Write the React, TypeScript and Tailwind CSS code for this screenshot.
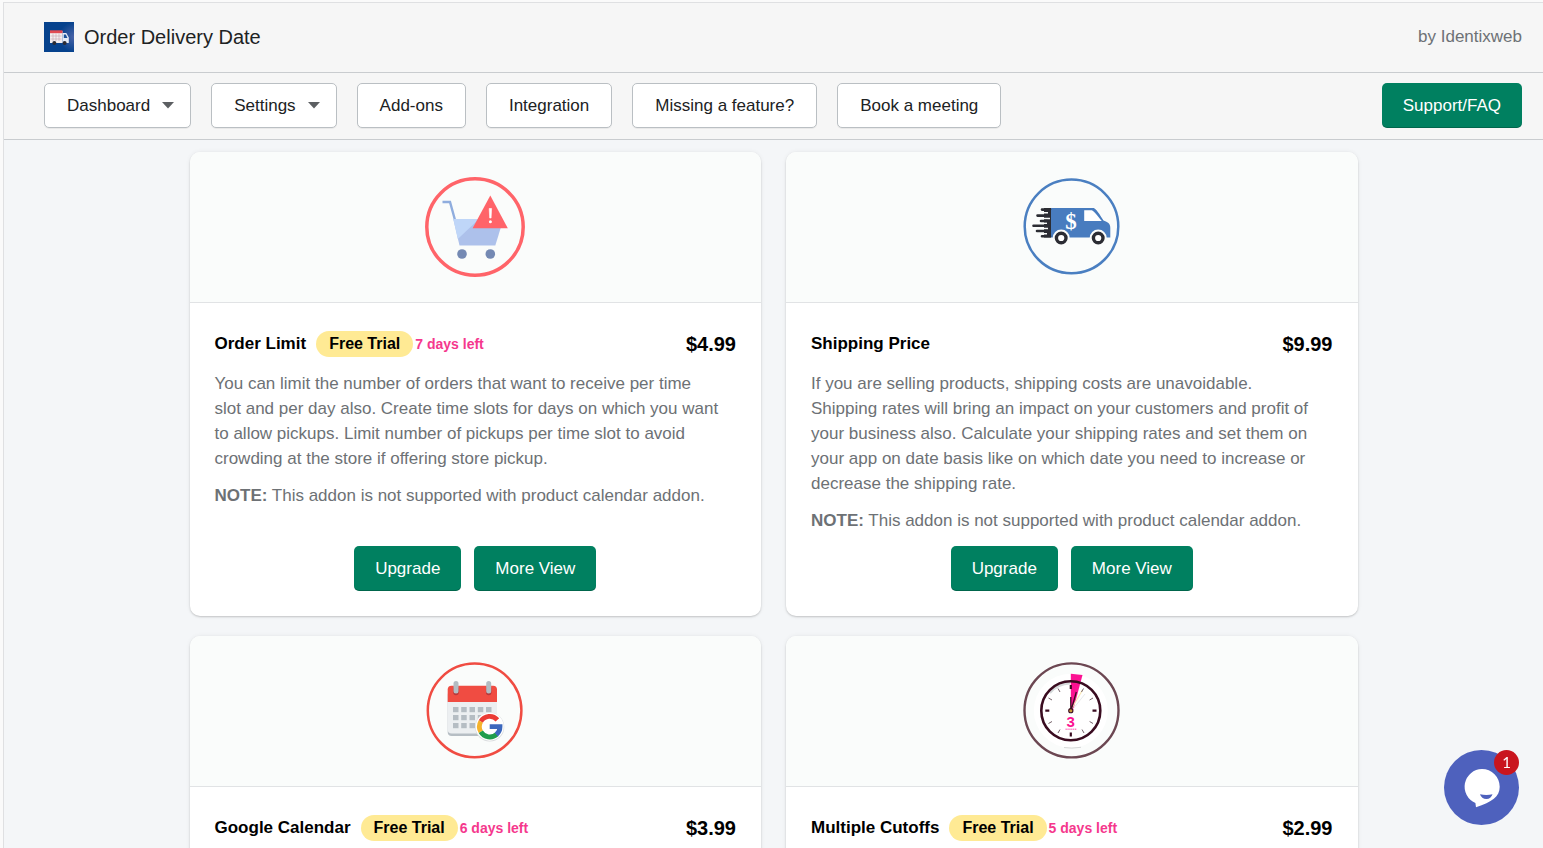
import type { ReactNode } from "react";

type Addon = {
  title: string;
  price: string;
  trial?: string;
  description?: string;
  note?: string;
  icon: ReactNode;
};

const CartLimitIcon = () => (
  <svg viewBox="0 0 100 100" className="size-[100px]" aria-hidden="true">
    <circle cx="50" cy="50" r="48.2" fill="none" stroke="#ff6469" strokeWidth="3.5" />
    <path d="M17.5 25H25L30 43" fill="none" stroke="#8fadde" strokeWidth="2.4" />
    <path d="M28.3 42H72L76 50L70.3 68.5H34.5Z" fill="#adc1eb" />
    <path d="M28.3 42H54L32.8 62Z" fill="#bfd6f8" />
    <path d="M65.3 18.5L82.8 51.2H47.6Z" fill="#ff6469" />
    <path d="M64.2 31.5h2.4l-.5 9.5h-1.4z" fill="#fff" stroke="#fff" strokeWidth=".6" />
    <circle cx="65.4" cy="44.8" r="1.5" fill="#fff" />
    <circle cx="37" cy="77" r="4.8" fill="#7489b3" />
    <circle cx="65.3" cy="77" r="4.8" fill="#7489b3" />
  </svg>
);

const ShippingIcon = () => (
  <svg viewBox="0 0 100 100" className="size-[100px]" aria-hidden="true">
    <circle cx="49.5" cy="49.4" r="46.8" fill="none" stroke="#4a7fc1" strokeWidth="2.5" />
    <path d="M28.5 31H71C73 31 75 33 81.5 43.5C87 45.5 88.3 47 88.3 51V60.5H28.5Z" fill="#487cbf" />
    <path d="M22 31H29V60.5H22Z" fill="#2b2c33" />
    <path d="M20 35.7H26M21 41.4H28M17 46.3H25M21 51.4H26M21 56.7H25" stroke="#fafcfb" strokeWidth="1.5" />
    <g stroke="#2b2c33" strokeWidth="2.6" strokeLinecap="round">
      <path d="M20 32.6H28M15.5 38.6H25M19 44H25M11.5 48.7H25M15 54H25M20 59.2H28" />
    </g>
    <path d="M62.2 33.2H69.8C72 34 75 38 79.8 44H62.2Z" fill="#fff" />
    <text x="49" y="52" textAnchor="middle" fontSize="23" className="fill-white font-['Liberation_Serif',serif] font-bold">
      $
    </text>
    <g fill="#fff" stroke="#fafcfb" strokeWidth="2">
      <circle cx="39.2" cy="61" r="7.5" />
      <circle cx="76.2" cy="61" r="7.5" />
    </g>
    <g fill="#fff" stroke="#2b2c33" strokeWidth="3.4">
      <circle cx="39.2" cy="61" r="4.8" />
      <circle cx="76.2" cy="61" r="4.8" />
    </g>
  </svg>
);

const CalendarIcon = () => (
  <svg viewBox="0 0 100 100" className="size-[100px]" aria-hidden="true">
    <circle cx="49.6" cy="49.4" r="46.8" fill="none" stroke="#f04c42" strokeWidth="2.5" />
    <rect x="22.7" y="30" width="49.3" height="45" rx="4" fill="#b6bec4" />
    <rect x="22.7" y="28" width="49.3" height="44.5" rx="4" fill="#eceff1" />
    <path d="M22.7 41V28.5Q22.7 24.7 26.5 24.7H68.2Q72 24.7 72 28.5V41Z" fill="#f04c42" />
    <g stroke="#b8373a" strokeWidth="5.5" strokeLinecap="round">
      <path d="M31 28V31.5M63.7 28V31.5" />
    </g>
    <g stroke="#b3bcc2" strokeWidth="5" strokeLinecap="round">
      <path d="M31 22.5V30M63.7 22.5V30" />
    </g>
    <g fill="#b5bdc3">
      {[46, 54, 62].map((y) =>
        [28, 36.2, 44.5, 52.8, 61].map((x) => <rect key={`${x}-${y}`} x={x} y={y} width="5.5" height="5.2" />)
      )}
    </g>
    <circle cx="64.7" cy="66" r="14.6" fill="#d9dcde" />
    <circle cx="64.7" cy="65.7" r="14" fill="#fff" />
    <g fill="none" strokeWidth="4.8">
      <path d="M55.8 60.5A10.3 10.3 0 0 1 72.4 58.8" stroke="#eb3b35" />
      <path d="M55.8 70.8A10.3 10.3 0 0 1 55.8 60.5" stroke="#f5b32c" />
      <path d="M71.8 73.2A10.3 10.3 0 0 1 55.8 70.8" stroke="#1f9d4c" />
      <path d="M64.7 65.7H75A10.3 10.3 0 0 1 71.3 73.6" stroke="#3c68bd" />
    </g>
  </svg>
);

const CutoffIcon = () => (
  <svg viewBox="0 0 100 100" className="size-[100px]" aria-hidden="true">
    <circle cx="49.5" cy="49.4" r="47" fill="#fafcfb" stroke="#6c4752" strokeWidth="2.4" />
    <circle cx="48.8" cy="49.7" r="37" fill="#fff" />
    <path d="M42 86.5Q49 87.8 59 86.3" fill="none" stroke="#d6d8d8" strokeWidth="1" />
    <circle cx="48.8" cy="49.7" r="29.5" fill="#fff" />
    <path d="M28 32A27 27 0 0 1 48 22.5" fill="none" stroke="#d5dadb" strokeWidth="2" />
    <path d="M48.8 12.7L60.5 14L51 49.7H48.8Z" fill="#fb1292" />
    <circle cx="48.8" cy="49.7" r="29.5" fill="none" stroke="#3a0c20" strokeWidth="2.6" />
    <path d="M50 47L60.5 29" stroke="#f7e6b5" strokeWidth="1.2" />
    <path d="M51 48L63 33" stroke="#e8ebec" strokeWidth="1" />
    <g stroke="#3a0c20" strokeWidth="2.2">
      <path d="M48.8 24V28M48.8 71.5V75.5M23.3 49.7H27.3M70.5 49.7H74.5" />
    </g>
    <g stroke="#76636b" strokeWidth="1">
      <path d="M36 27.5L38 31M26.5 37L30 39M67.6 39L71 37M67.6 60.5L71 62.5M60 68.5L62 72M38 68.5L36 72M30 60.5L26.5 62.5M59.5 31L61.5 27.5" />
    </g>
    <path d="M48.8 49.7V36M49.2 49L54.3 31" stroke="#3a0c20" strokeWidth="1.3" />
    <circle cx="48.8" cy="49.7" r="2.1" fill="#c99a35" stroke="#3a0c20" strokeWidth="1.1" />
    <text x="48.7" y="65.6" textAnchor="middle" fontSize="15" className="fill-[#fb1292] font-['Liberation_Sans',sans-serif] font-bold">
      3
    </text>
    <path d="M43.5 68.3H54.5" stroke="#fb1292" strokeOpacity=".55" strokeWidth="1.6" strokeDasharray="1.3 .6" />
  </svg>
);

const Logo = () => (
  <svg viewBox="0 0 30 30" className="size-[30px]" aria-hidden="true">
    <defs>
      <radialGradient id="logo-glow" cx="1" cy=".5" r=".5">
        <stop offset="0" stopColor="#4a64a8" />
        <stop offset="1" stopColor="#06428d" />
      </radialGradient>
    </defs>
    <rect width="30" height="30" fill="url(#logo-glow)" />
    <path d="M6 9H18.5V21H6Z" fill="#f3eef0" />
    <path d="M6 8.3H18.5V11.2H6Z" fill="#e24a52" />
    <path d="M18.5 11H22.3L24.8 15.5V21H18.5Z" fill="#e6edf7" />
    <path d="M19.8 12.5H21.8L23.5 16H19.8Z" fill="#1c5299" />
    <path d="M6.5 14H17.5M6.5 17H17.5M9 11.5V19M12 11.5V19M15 11.5V19" stroke="#c8a5ae" strokeWidth=".6" />
    <circle cx="10.3" cy="21" r="2" fill="#2b2b33" />
    <circle cx="20.6" cy="21" r="2" fill="#2b2b33" />
  </svg>
);

const navItems = [
  { label: "Dashboard", menu: true },
  { label: "Settings", menu: true },
  { label: "Add-ons" },
  { label: "Integration" },
  { label: "Missing a feature?" },
  { label: "Book a meeting" },
];

const addons: Addon[] = [
  {
    title: "Order Limit",
    price: "$4.99",
    trial: "7 days left",
    description:
      "You can limit the number of orders that want to receive per time slot and per day also. Create time slots for days on which you want to allow pickups. Limit number of pickups per time slot to avoid crowding at the store if offering store pickup.",
    note: "This addon is not supported with product calendar addon.",
    icon: <CartLimitIcon />,
  },
  {
    title: "Shipping Price",
    price: "$9.99",
    description:
      "If you are selling products, shipping costs are unavoidable. Shipping rates will bring an impact on your customers and profit of your business also. Calculate your shipping rates and set them on your app on date basis like on which date you need to increase or decrease the shipping rate.",
    note: "This addon is not supported with product calendar addon.",
    icon: <ShippingIcon />,
  },
  { title: "Google Calendar", price: "$3.99", trial: "6 days left", icon: <CalendarIcon /> },
  { title: "Multiple Cutoffs", price: "$2.99", trial: "5 days left", icon: <CutoffIcon /> },
];

const PrimaryButton = ({ children }: { children: ReactNode }) => (
  <button
    type="button"
    className="h-[45px] rounded-[5px] bg-[#008060] px-[21px] text-[17px] text-white shadow-[inset_0_-1px_0_rgba(0,0,0,0.2)] hover:bg-[#006e52]"
  >
    {children}
  </button>
);

const AddonCard = ({ addon }: { addon: Addon }) => (
  <article className="flex flex-col overflow-hidden rounded-[10px] bg-white shadow-[0_0_5px_rgba(23,24,24,0.06),0_1px_2px_rgba(0,0,0,0.18)]">
    <div className="flex justify-center border-b border-[#e1e3e5] bg-[#fafcfb] py-[25px]">{addon.icon}</div>

    <div className="flex flex-1 flex-col p-[25px]">
      <div className="mb-[11px] flex h-8 items-center">
        <h2 className="text-[17px] font-bold text-black">{addon.title}</h2>
        {addon.trial && (
          <>
            <span className="ml-[10px] rounded-full bg-[#ffea94] px-[13px] text-[16px] leading-[26px] font-bold text-black">
              Free Trial
            </span>
            <span className="ml-[2px] text-[14px] font-bold text-[#f5388d]">{addon.trial}</span>
          </>
        )}
        <span className="ml-auto text-[20px] font-bold text-black">{addon.price}</span>
      </div>

      {addon.description && (
        <>
          <div className="max-w-[507px] space-y-3 text-[17px] leading-[25px] text-[#6d7175]">
            <p>{addon.description}</p>
            <p>
              <strong>NOTE:</strong> {addon.note}
            </p>
          </div>
          <div className="mt-auto flex justify-center gap-[13px] pt-[13px]">
            <PrimaryButton>Upgrade</PrimaryButton>
            <PrimaryButton>More View</PrimaryButton>
          </div>
        </>
      )}
    </div>
  </article>
);

const App = () => {
  return (
    <div className="flex h-screen flex-col overflow-hidden bg-[#fafafa] pt-[2px] font-['Liberation_Sans',Arial,sans-serif] text-[#202223]">
      <div className="ml-[3px] flex min-h-0 flex-1 flex-col border-t border-l border-[#dfe0e2] bg-[#f4f6f8]">
        {/* App title bar */}
        <header className="flex h-[70px] shrink-0 items-center justify-between border-b border-[#c9cccf] bg-[#f6f6f6] pr-[21px] pb-[2px] pl-10">
          <div className="flex items-center gap-[10px]">
            <Logo />
            <h1 className="text-[20px] leading-[28px]">Order Delivery Date</h1>
          </div>
          <span className="text-[17px] text-[#6d7175]">by Identixweb</span>
        </header>

        {/* Navigation */}
        <nav className="flex shrink-0 items-center gap-5 border-b border-[#c9cccf] bg-[#f6f6f6] pt-[10px] pr-[21px] pb-[11px] pl-10">
          {navItems.map((item) => (
            <button
              key={item.label}
              type="button"
              className="flex h-[45px] items-center rounded-[5px] border border-[#babfc3] bg-white px-[22px] text-[17px] whitespace-nowrap shadow-[0_1px_0_rgba(0,0,0,0.05)] hover:bg-gray-50"
            >
              {item.label}
              {item.menu && (
                <svg viewBox="0 0 12 7" className="mr-[-6px] ml-3 h-[7px] w-3" aria-hidden="true">
                  <path d="M0 0H12L6 6.6Z" fill="#5c5f62" />
                </svg>
              )}
            </button>
          ))}
          <div className="ml-auto">
            <PrimaryButton>Support/FAQ</PrimaryButton>
          </div>
        </nav>

        {/* Add-on cards */}
        <main className="min-h-0 flex-1 overflow-hidden px-5 pt-3">
          <div className="mx-auto grid max-w-[1168px] grid-cols-2 gap-x-[25px] gap-y-5">
            {addons.map((addon) => (
              <AddonCard key={addon.title} addon={addon} />
            ))}
          </div>
        </main>
      </div>

      {/* Chat launcher */}
      <button
        type="button"
        aria-label="Open chat"
        className="fixed right-6 bottom-[23px] size-[75px] rounded-full bg-[#4e61bd]"
      >
        <svg viewBox="0 0 75 75" className="size-[75px]" aria-hidden="true">
          <path
            d="M38 19A17.7 17.7 0 0 1 55.7 36.7C55.7 47 48 51.5 32 57.3L31.4 53A17.7 17.7 0 0 1 38 19Z"
            fill="#fff"
          />
          <path d="M36 44.3Q42.5 45.8 48.5 44.3Q47 49 42.4 49Q37.5 49 36 44.3Z" fill="#4e61bd" />
        </svg>
        <span className="absolute top-0 right-0 flex size-[25px] items-center justify-center rounded-full bg-[#c9151e] font-[Lato,sans-serif] text-[15px] text-white">
          1
        </span>
      </button>
    </div>
  );
};

export default App;
